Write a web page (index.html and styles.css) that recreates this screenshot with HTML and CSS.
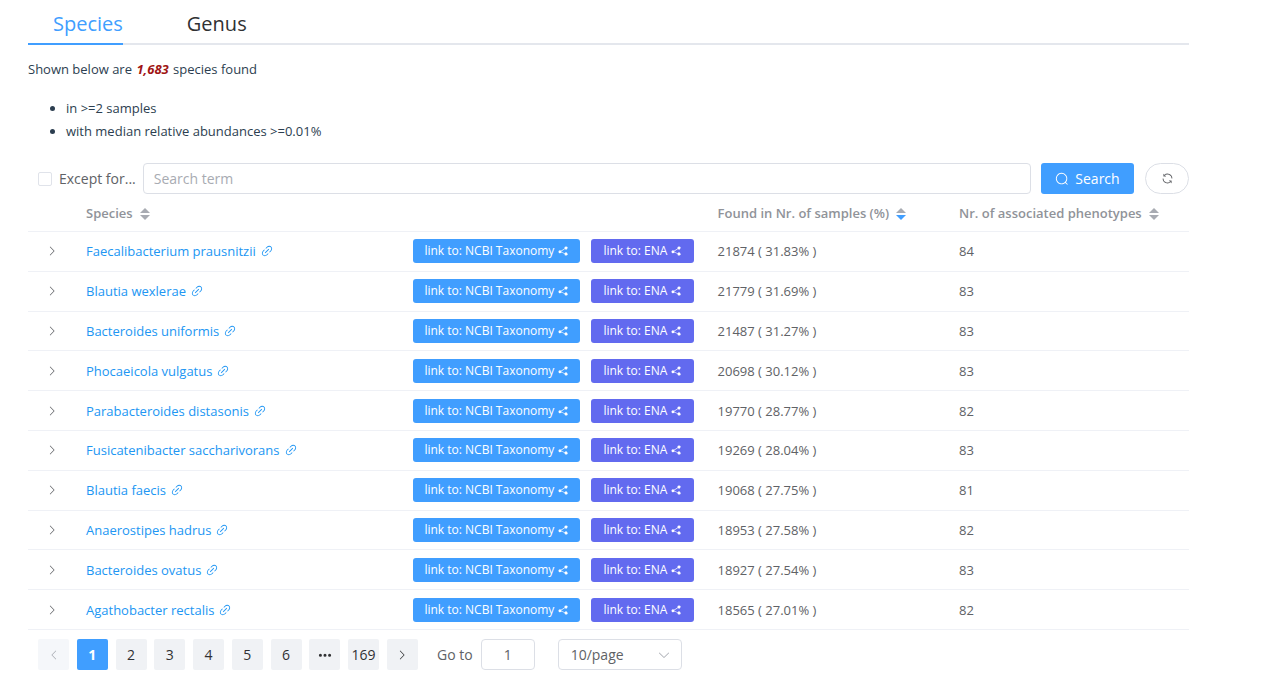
FILE: index.html
```html
<!DOCTYPE html>
<html lang="en">
<head>
<meta charset="utf-8">
<title>Species</title>
<link rel="stylesheet" href="styles.css">
</head>
<body>
<svg class="sprite" aria-hidden="true">
  <symbol id="link" viewBox="0 0 1024 1024"><path d="M715.648 625.152 670.4 579.904l90.496-90.56c75.008-74.944 85.12-186.368 22.656-248.896-62.528-62.464-173.952-52.352-248.96 22.656L444.16 353.6l-45.248-45.248 90.496-90.496c100.032-99.968 251.968-110.08 339.456-22.656 87.488 87.488 77.312 239.424-22.656 339.456l-90.496 90.496zm-90.496 90.496-90.496 90.496C434.624 906.112 282.688 916.224 195.2 828.8c-87.488-87.488-77.312-239.424 22.656-339.456l90.496-90.496 45.248 45.248-90.496 90.56c-75.008 74.944-85.12 186.368-22.656 248.896 62.528 62.464 173.952 52.352 248.96-22.656l90.496-90.496 45.248 45.248zm0-362.048 45.248 45.248L398.848 670.4 353.6 625.152 625.152 353.6z"/></symbol>
  <symbol id="share" viewBox="0 0 1024 1024"><path d="m679.872 348.8-301.76 188.608a127.808 127.808 0 0 1 5.12 52.16l279.936 104.96a128 128 0 1 1-22.464 59.904l-279.872-104.96a128 128 0 1 1-16.64-166.272l301.696-188.608a128 128 0 1 1 33.92 54.272z"/></symbol>
  <symbol id="refresh" viewBox="0 0 1024 1024"><path d="M771.776 794.88A384 384 0 0 1 128 512h64a320 320 0 0 0 555.712 216.448H654.72a32 32 0 1 1 0-64h149.056a32 32 0 0 1 32 32v148.928a32 32 0 1 1-64 0v-50.56zM276.288 295.616h92.992a32 32 0 0 1 0 64H220.16a32 32 0 0 1-32-32V178.56a32 32 0 0 1 64 0v50.56A384 384 0 0 1 896.128 512h-64a320 320 0 0 0-555.776-216.384z"/></symbol>
  <symbol id="search" viewBox="0 0 1024 1024"><path d="m795.904 750.72 124.992 124.928a32 32 0 0 1-45.248 45.248L750.656 795.904a416 416 0 1 1 45.248-45.248zM480 832a352 352 0 1 0 0-704 352 352 0 0 0 0 704z"/></symbol>
  <symbol id="right" viewBox="0 0 1024 1024"><path d="M340.864 149.312a30.592 30.592 0 0 0 0 42.752L652.736 512 340.864 831.872a30.592 30.592 0 0 0 0 42.752 29.12 29.12 0 0 0 41.728 0L714.24 534.336a32 32 0 0 0 0-44.672L382.592 149.376a29.12 29.12 0 0 0-41.728 0z"/></symbol>
  <symbol id="left" viewBox="0 0 1024 1024"><path transform="matrix(-1 0 0 1 1024 0)" d="M340.864 149.312a30.592 30.592 0 0 0 0 42.752L652.736 512 340.864 831.872a30.592 30.592 0 0 0 0 42.752 29.12 29.12 0 0 0 41.728 0L714.24 534.336a32 32 0 0 0 0-44.672L382.592 149.376a29.12 29.12 0 0 0-41.728 0z"/></symbol>
  <symbol id="down" viewBox="0 0 1024 1024"><path transform="rotate(90 512 512)" d="M340.864 149.312a30.592 30.592 0 0 0 0 42.752L652.736 512 340.864 831.872a30.592 30.592 0 0 0 0 42.752 29.12 29.12 0 0 0 41.728 0L714.24 534.336a32 32 0 0 0 0-44.672L382.592 149.376a29.12 29.12 0 0 0-41.728 0z"/></symbol>
  <symbol id="more" viewBox="0 0 1024 1024"><path d="M176 416a112 112 0 1 1 0 224 112 112 0 0 1 0-224m336 0a112 112 0 1 1 0 224 112 112 0 0 1 0-224m336 0a112 112 0 1 1 0 224 112 112 0 0 1 0-224"/></symbol>
</svg>
<main class="page">
  <nav class="tabs">
    <a class="tab tab-active" href="#species">Species</a>
    <a class="tab" href="#genus">Genus</a>
  </nav>
  <p class="summary">Shown below are <em class="count">1,683</em> species found</p>
  <ul class="criteria">
    <li>in &gt;=2 samples</li>
    <li>with median relative abundances &gt;=0.01%</li>
  </ul>
  <form class="toolbar">
    <label class="except"><input class="checkbox" type="checkbox">Except for...</label>
    <input class="term" type="text" placeholder="Search term" aria-label="Search term">
    <button class="search" type="button"><svg class="icon"><use href="#search"/></svg>Search</button>
    <button class="refresh" type="button" aria-label="Refresh"><svg class="icon"><use href="#refresh"/></svg></button>
  </form>
  <table class="table">
    <colgroup><col class="col-expand"><col class="col-species"><col class="col-links"><col class="col-found"><col></colgroup>
    <thead>
      <tr><th></th><th>Species<span class="sort"></span></th><th></th><th>Found in Nr. of samples (%)<span class="sort sort-desc"></span></th><th>Nr. of associated phenotypes<span class="sort"></span></th></tr>
    </thead>
    <tbody>
      <tr><td><button class="expand" type="button" aria-label="Expand"><svg class="chevron"><use href="#right"/></svg></button></td><td><a class="name" href="#s1">Faecalibacterium prausnitzii<svg class="icon"><use href="#link"/></svg></a></td><td><div class="links"><button class="out ncbi" type="button">link to: NCBI Taxonomy<svg class="small"><use href="#share"/></svg></button><button class="out ena" type="button">link to: ENA<svg class="small"><use href="#share"/></svg></button></div></td><td>21874 ( 31.83% )</td><td>84</td></tr>
      <tr><td><button class="expand" type="button" aria-label="Expand"><svg class="chevron"><use href="#right"/></svg></button></td><td><a class="name" href="#s2">Blautia wexlerae<svg class="icon"><use href="#link"/></svg></a></td><td><div class="links"><button class="out ncbi" type="button">link to: NCBI Taxonomy<svg class="small"><use href="#share"/></svg></button><button class="out ena" type="button">link to: ENA<svg class="small"><use href="#share"/></svg></button></div></td><td>21779 ( 31.69% )</td><td>83</td></tr>
      <tr><td><button class="expand" type="button" aria-label="Expand"><svg class="chevron"><use href="#right"/></svg></button></td><td><a class="name" href="#s3">Bacteroides uniformis<svg class="icon"><use href="#link"/></svg></a></td><td><div class="links"><button class="out ncbi" type="button">link to: NCBI Taxonomy<svg class="small"><use href="#share"/></svg></button><button class="out ena" type="button">link to: ENA<svg class="small"><use href="#share"/></svg></button></div></td><td>21487 ( 31.27% )</td><td>83</td></tr>
      <tr><td><button class="expand" type="button" aria-label="Expand"><svg class="chevron"><use href="#right"/></svg></button></td><td><a class="name" href="#s4">Phocaeicola vulgatus<svg class="icon"><use href="#link"/></svg></a></td><td><div class="links"><button class="out ncbi" type="button">link to: NCBI Taxonomy<svg class="small"><use href="#share"/></svg></button><button class="out ena" type="button">link to: ENA<svg class="small"><use href="#share"/></svg></button></div></td><td>20698 ( 30.12% )</td><td>83</td></tr>
      <tr><td><button class="expand" type="button" aria-label="Expand"><svg class="chevron"><use href="#right"/></svg></button></td><td><a class="name" href="#s5">Parabacteroides distasonis<svg class="icon"><use href="#link"/></svg></a></td><td><div class="links"><button class="out ncbi" type="button">link to: NCBI Taxonomy<svg class="small"><use href="#share"/></svg></button><button class="out ena" type="button">link to: ENA<svg class="small"><use href="#share"/></svg></button></div></td><td>19770 ( 28.77% )</td><td>82</td></tr>
      <tr><td><button class="expand" type="button" aria-label="Expand"><svg class="chevron"><use href="#right"/></svg></button></td><td><a class="name" href="#s6">Fusicatenibacter saccharivorans<svg class="icon"><use href="#link"/></svg></a></td><td><div class="links"><button class="out ncbi" type="button">link to: NCBI Taxonomy<svg class="small"><use href="#share"/></svg></button><button class="out ena" type="button">link to: ENA<svg class="small"><use href="#share"/></svg></button></div></td><td>19269 ( 28.04% )</td><td>83</td></tr>
      <tr><td><button class="expand" type="button" aria-label="Expand"><svg class="chevron"><use href="#right"/></svg></button></td><td><a class="name" href="#s7">Blautia faecis<svg class="icon"><use href="#link"/></svg></a></td><td><div class="links"><button class="out ncbi" type="button">link to: NCBI Taxonomy<svg class="small"><use href="#share"/></svg></button><button class="out ena" type="button">link to: ENA<svg class="small"><use href="#share"/></svg></button></div></td><td>19068 ( 27.75% )</td><td>81</td></tr>
      <tr><td><button class="expand" type="button" aria-label="Expand"><svg class="chevron"><use href="#right"/></svg></button></td><td><a class="name" href="#s8">Anaerostipes hadrus<svg class="icon"><use href="#link"/></svg></a></td><td><div class="links"><button class="out ncbi" type="button">link to: NCBI Taxonomy<svg class="small"><use href="#share"/></svg></button><button class="out ena" type="button">link to: ENA<svg class="small"><use href="#share"/></svg></button></div></td><td>18953 ( 27.58% )</td><td>82</td></tr>
      <tr><td><button class="expand" type="button" aria-label="Expand"><svg class="chevron"><use href="#right"/></svg></button></td><td><a class="name" href="#s9">Bacteroides ovatus<svg class="icon"><use href="#link"/></svg></a></td><td><div class="links"><button class="out ncbi" type="button">link to: NCBI Taxonomy<svg class="small"><use href="#share"/></svg></button><button class="out ena" type="button">link to: ENA<svg class="small"><use href="#share"/></svg></button></div></td><td>18927 ( 27.54% )</td><td>83</td></tr>
      <tr><td><button class="expand" type="button" aria-label="Expand"><svg class="chevron"><use href="#right"/></svg></button></td><td><a class="name" href="#s10">Agathobacter rectalis<svg class="icon"><use href="#link"/></svg></a></td><td><div class="links"><button class="out ncbi" type="button">link to: NCBI Taxonomy<svg class="small"><use href="#share"/></svg></button><button class="out ena" type="button">link to: ENA<svg class="small"><use href="#share"/></svg></button></div></td><td>18565 ( 27.01% )</td><td>82</td></tr>
    </tbody>
  </table>
  <div class="pagination">
    <div class="pager">
      <button class="pg" type="button" disabled aria-label="Previous page"><svg class="small"><use href="#left"/></svg></button>
      <button class="pg pg-active" type="button">1</button>
      <button class="pg" type="button">2</button>
      <button class="pg" type="button">3</button>
      <button class="pg" type="button">4</button>
      <button class="pg" type="button">5</button>
      <button class="pg" type="button">6</button>
      <button class="pg" type="button" aria-label="More pages"><svg class="icon"><use href="#more"/></svg></button>
      <button class="pg" type="button">169</button>
      <button class="pg" type="button" aria-label="Next page"><svg class="small"><use href="#right"/></svg></button>
    </div>
    <label class="goto">Go to<input class="goto-input" type="text" value="1"></label>
    <div class="size">
      <select class="size-select" aria-label="Page size"><option>10/page</option><option>20/page</option></select>
      <svg class="size-arrow icon"><use href="#down"/></svg>
    </div>
  </div>
</main>
</body>
</html>
```

FILE: styles.css
```css
* { box-sizing: border-box; }
body { margin: 0; background: #fff; color: #2c3e50; font: 13px/20px "Open Sans", "Noto Sans", sans-serif; }
button, input, select { font: inherit; color: inherit; margin: 0; }
button { cursor: pointer; }
svg { fill: currentColor; }
.sprite { display: none; }
.icon { width: 14px; height: 14px; flex: none; }
.small, .chevron { width: 12px; height: 12px; flex: none; }
.page { padding: 0 77px 0 28px; }

.tabs { display: flex; gap: 39px; border-bottom: 2px solid #e4e7ed; }
.tab { height: 45px; margin-bottom: -2px; padding-left: 25px; font-size: 20px; line-height: 48px; color: #303133; text-decoration: none; }
.tab-active { color: #409eff; border-bottom: 2px solid #409eff; }

.summary { margin: 14px 0 18px; }
.count { color: #a01414; font-weight: 700; margin: 0 1px; }
.criteria { margin: 0; padding-left: 38px; line-height: 23px; }

.toolbar { display: flex; align-items: center; margin-top: 20px; padding-left: 10px; font-size: 14px; color: #606266; }
.except { display: flex; align-items: center; gap: 7px; margin-right: 7px; white-space: nowrap; }
.checkbox { appearance: none; width: 14px; height: 14px; border: 1px solid #e0e3ea; border-radius: 2px; background: #fff; }
.term { flex: 1; min-width: 0; height: 31px; padding: 0 10px; border: 1px solid #dcdfe6; border-radius: 4px; outline: 0; }
.term::placeholder { color: #a8abb2; opacity: 1; }
.search { display: flex; align-items: center; justify-content: center; gap: 6px; width: 93px; height: 31px; margin-left: 10px; padding: 0; border: 0; border-radius: 3px; background: #409eff; color: #fff; }
.refresh { display: flex; align-items: center; justify-content: center; width: 44px; height: 31px; margin-left: 11px; padding: 0; border: 1px solid #dcdfe6; border-radius: 16px; background: #fff; }
.refresh .icon { width: 13px; height: 13px; }

.table { width: 100%; height: 436px; table-layout: fixed; border-collapse: separate; border-spacing: 0; color: #606266; }
.col-expand { width: 48px; }
.col-species { width: 28.2%; }
.col-links { width: 26.2%; }
.col-found { width: 20.8%; }
.table th { height: 38px; text-align: left; color: #909399; font-weight: 600; }
.table th, .table td { padding: 0 10px; border-bottom: 1px solid #eff1f6; white-space: nowrap; }
.sort { display: inline-flex; flex-direction: column; gap: 2px; margin-left: 7px; vertical-align: middle; }
.sort::before, .sort::after { content: ""; border: 5px solid transparent; }
.sort::before { border-top: 0; border-bottom-color: #a8abb2; }
.sort::after { border-bottom: 0; border-top-color: #a8abb2; }
.sort-desc::after { border-top-color: #409eff; }
.expand { display: flex; margin: 0 auto; padding: 0; border: 0; background: none; }
.name { display: inline-flex; align-items: center; gap: 4px; color: #2196f3; text-decoration: none; }
.links { display: flex; gap: 11px; }
.out { display: flex; align-items: center; justify-content: center; gap: 3px; height: 24px; padding: 0; border: 0; border-radius: 3px; color: #fff; font-size: 12px; }
.ncbi { width: 167px; background: #409eff; }
.ena { width: 103px; background: #626aef; }

.pagination { display: flex; align-items: center; margin-top: 9px; padding: 0 0 7px 10px; font-size: 14px; color: #606266; }
.pager { display: flex; justify-content: space-between; width: 380px; }
.pg { display: flex; align-items: center; justify-content: center; width: 31px; height: 31px; padding: 0; border: 0; border-radius: 2px; background: #f0f2f5; color: #303133; }
.pg:disabled { background: #f5f7fa; color: #a8abb2; }
.pg-active { background: #409eff; color: #fff; font-weight: 700; }
.goto { display: flex; align-items: center; gap: 8px; margin-left: 19px; }
.goto-input { width: 54px; height: 31px; border: 1px solid #dcdfe6; border-radius: 4px; text-align: center; }
.size { position: relative; margin-left: 23px; }
.size-select { display: block; appearance: none; width: 124px; height: 31px; padding: 0 12px; border: 1px solid #dcdfe6; border-radius: 4px; background: #fff; }
.size-arrow { position: absolute; right: 11px; top: 9px; color: #a8abb2; pointer-events: none; }
```
